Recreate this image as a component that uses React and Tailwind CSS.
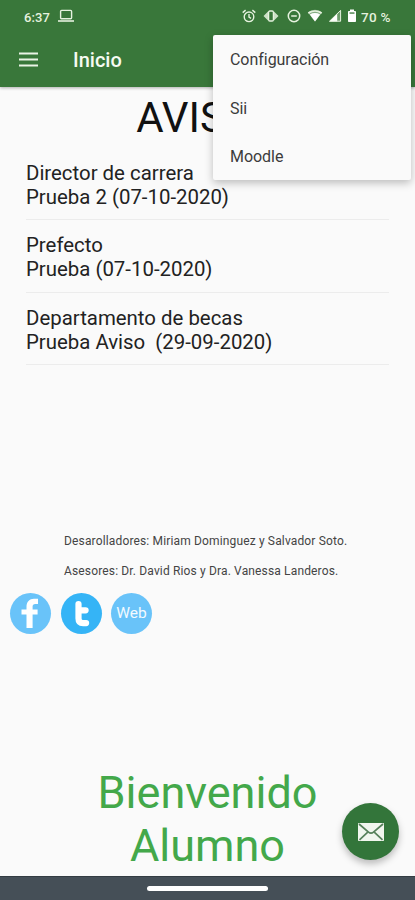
import React from 'react';

const AVISOS = [
  { from: 'Director de carrera', detail: 'Prueba 2 (07-10-2020)' },
  { from: 'Prefecto', detail: 'Prueba (07-10-2020)' },
  { from: 'Departamento de becas', detail: 'Prueba Aviso  (29-09-2020)' },
];

const MENU_ITEMS = ['Configuración', 'Sii', 'Moodle'];

function StatusBar() {
  return (
    <div className="flex h-8 items-center pl-6 pr-[22px] text-[#e6f2df]">
      <span className="w-[27px] text-[13px] font-medium leading-none tracking-[0.1px] whitespace-nowrap pt-0.5">6:37</span>
      <svg className="ml-[7px]" width="16" height="14" viewBox="0 0 16 14" fill="none" stroke="currentColor" strokeWidth="1.4">
        <rect x="2.6" y="1.4" width="11" height="8.4" rx="1" />
        <path d="M0 12h16" strokeWidth="1.6" />
      </svg>

      <div className="ml-auto flex items-center">
        {/* alarm */}
        <svg width="14" height="14" viewBox="0 0 14 14" fill="none" stroke="currentColor" strokeWidth="1.4">
          <circle cx="7" cy="7.8" r="4.8" />
          <path d="M7 5v3l2 1.3M.7 3.6 3.6 1.1M13.3 3.6l-2.9-2.5" />
        </svg>
        {/* vibrate */}
        <svg className="ml-[7px]" width="16" height="14" viewBox="0 0 16 14">
          <path d="M5 2.5v9L.5 7zM11 2.5v9L15.5 7z" fill="currentColor" opacity="0.85" />
          <rect x="5.6" y="2" width="4.8" height="10" rx="1.2" fill="none" stroke="currentColor" strokeWidth="1.3" />
        </svg>
        {/* do not disturb */}
        <svg className="ml-2" width="14" height="14" viewBox="0 0 14 14" fill="none" stroke="currentColor" strokeWidth="1.5">
          <circle cx="7" cy="7" r="5.7" />
          <path d="M4.2 7h5.6" />
        </svg>
        {/* wifi */}
        <svg className="ml-1.5" width="16" height="14" viewBox="0 0 16 14">
          <path d="M.8 3.4C5-.2 11-.2 15.2 3.4L8 12.6z" fill="currentColor" opacity="0.45" />
          <path d="M.8 3.4C5 .4 11 .4 15.2 3.4L14 5C10 2 6 2 2 5z" fill="currentColor" />
          <path d="M2.8 5.4C6 3.6 10 3.6 13.2 5.4L8 12.6z" fill="#fff" />
        </svg>
        {/* signal */}
        <svg className="ml-[5px]" width="14" height="14" viewBox="0 0 14 14">
          <path d="M12.8 1v11.4H1.2z" fill="currentColor" opacity="0.3" />
          <path d="M9.2 4.5v7.9H1.2z" fill="#fff" />
          <path d="M1.6 12.2h11V1.4z" fill="none" stroke="currentColor" />
        </svg>
        {/* battery */}
        <svg className="ml-[5px]" width="10" height="14" viewBox="0 0 10 14">
          <path d="M3 .6h4v1.5h1.2q.8 0 .8.8v9.3q0 .8-.8.8H1.8q-.8 0-.8-.8V2.9q0-.8.8-.8H3z" fill="#fff" />
          <path d="M2.5 3.4h5v1.3h-5z" fill="#39773a" />
        </svg>
        <span className="ml-1 w-8 text-[13.5px] font-medium leading-none tracking-[0.3px] whitespace-nowrap pt-[3px]">70 %</span>
      </div>
    </div>
  );
}

function AppBar() {
  return (
    <header className="h-[87px] shrink-0 bg-[#39773a] shadow-[0_1px_3px_rgba(0,0,0,0.3)]">
      <StatusBar />
      <div className="flex h-[55px] items-center pl-[19px]">
        <svg width="19" height="15" viewBox="0 0 19 15" stroke="#eaf3e5" strokeWidth="2">
          <path d="M0 1.5h19M0 7.5h19M0 13.5h19" />
        </svg>
        <h1 className="ml-[35px] pt-px text-[20px] font-medium leading-none text-[#f6fbf2]">Inicio</h1>
      </div>
    </header>
  );
}

function OverflowMenu() {
  return (
    <ul className="absolute left-[213px] top-[35px] h-[145px] w-[198px] rounded-[2px] bg-[#fafafa] pt-px shadow-[0_3px_8px_rgba(0,0,0,0.25)]">
      {MENU_ITEMS.map((item) => (
        <li key={item} className="flex h-[48.5px] items-center pl-[17px] text-[16px] tracking-[-0.04px] text-[#3c3c3c]">
          {item}
        </li>
      ))}
    </ul>
  );
}

function SocialLinks() {
  return (
    <div className="flex gap-[9.5px] pl-2.5">
      <a className="flex h-[41px] w-[41px] items-center justify-center rounded-full bg-[#69c3f9]">
        <svg width="41" height="41" viewBox="0 0 41 41" fill="#fff">
          <path d="M16.5 35V21.5h-5v-5h5v-2.8c0-5 3-8 7.5-8h4v5.2h-2.8c-1.8 0-2.6.9-2.6 2.7v2.9h5v5h-5V35z" />
        </svg>
      </a>
      <a className="flex h-[41px] w-[41px] items-center justify-center rounded-full bg-[#35b4f6]">
        <svg width="41" height="41" viewBox="0 0 41 41" fill="none" stroke="#fff" strokeWidth="6.2" strokeLinecap="round" strokeLinejoin="round">
          <path d="M17.5 11v14.5c0 3.2 1.6 4.6 4.6 4.6h3M17.8 17.3h6.8" />
        </svg>
      </a>
      <a className="flex h-[41px] w-[41px] items-center justify-center rounded-full bg-[#69c3f9] text-[15.5px] text-[#f2faff]">
        Web
      </a>
    </div>
  );
}

function MailButton() {
  return (
    <button className="absolute left-[342px] top-[803px] flex h-[57px] w-[57px] items-center justify-center rounded-full bg-[#33753a] shadow-[0_4px_7px_rgba(0,0,0,0.25)]">
      <svg width="26" height="18" viewBox="0 0 26 18">
        <rect width="26" height="18" rx="0.8" fill="#f1f6ee" />
        <path d="M1 1 10.5 9.2q2.5 2 5 0L25 1M1.5 16.8l8-7.5M24.5 16.8l-8-7.5" fill="none" stroke="#56805a" strokeWidth="1.7" />
      </svg>
    </button>
  );
}

export default function App() {
  return (
    <div className="relative flex h-[900px] w-[415px] flex-col overflow-hidden bg-[#fafafa] font-[Roboto,sans-serif] text-[#222]">
      <AppBar />

      <main className="flex flex-1 flex-col">
        <h2 className="pt-[6px] text-center text-[42px] leading-[50px] text-[#111]">AVISOS</h2>

        <ul className="mx-[26px] mt-[4.5px]">
          {AVISOS.map((aviso) => (
            <li key={aviso.from} className="h-[72.6px] border-b border-[#ececec] pt-[13px] text-[20.4px] leading-6 whitespace-pre">
              <p>{aviso.from}</p>
              <p>{aviso.detail}</p>
            </li>
          ))}
        </ul>

        <div className="mt-[162px] pl-16 text-[12px] leading-[29.5px] tracking-[0.15px] text-[#444] whitespace-nowrap">
          <p>Desarolladores: Miriam Dominguez y Salvador Soto.</p>
          <p>Asesores: Dr. David Rios y Dra. Vanessa Landeros.</p>
        </div>

        <div className="mt-[7px]">
          <SocialLinks />
        </div>

        <p className="mt-auto pb-1 text-center text-[45px] leading-[53px] text-[#43a84a]">
          Bienvenido
          <br />
          Alumno
        </p>
      </main>

      <footer className="flex h-6 shrink-0 justify-center border-t border-[#333c42] bg-[#454f57] pt-[9px]">
        <div className="h-[5px] w-[121px] rounded-full bg-white" />
      </footer>

      <OverflowMenu />
      <MailButton />
    </div>
  );
}
